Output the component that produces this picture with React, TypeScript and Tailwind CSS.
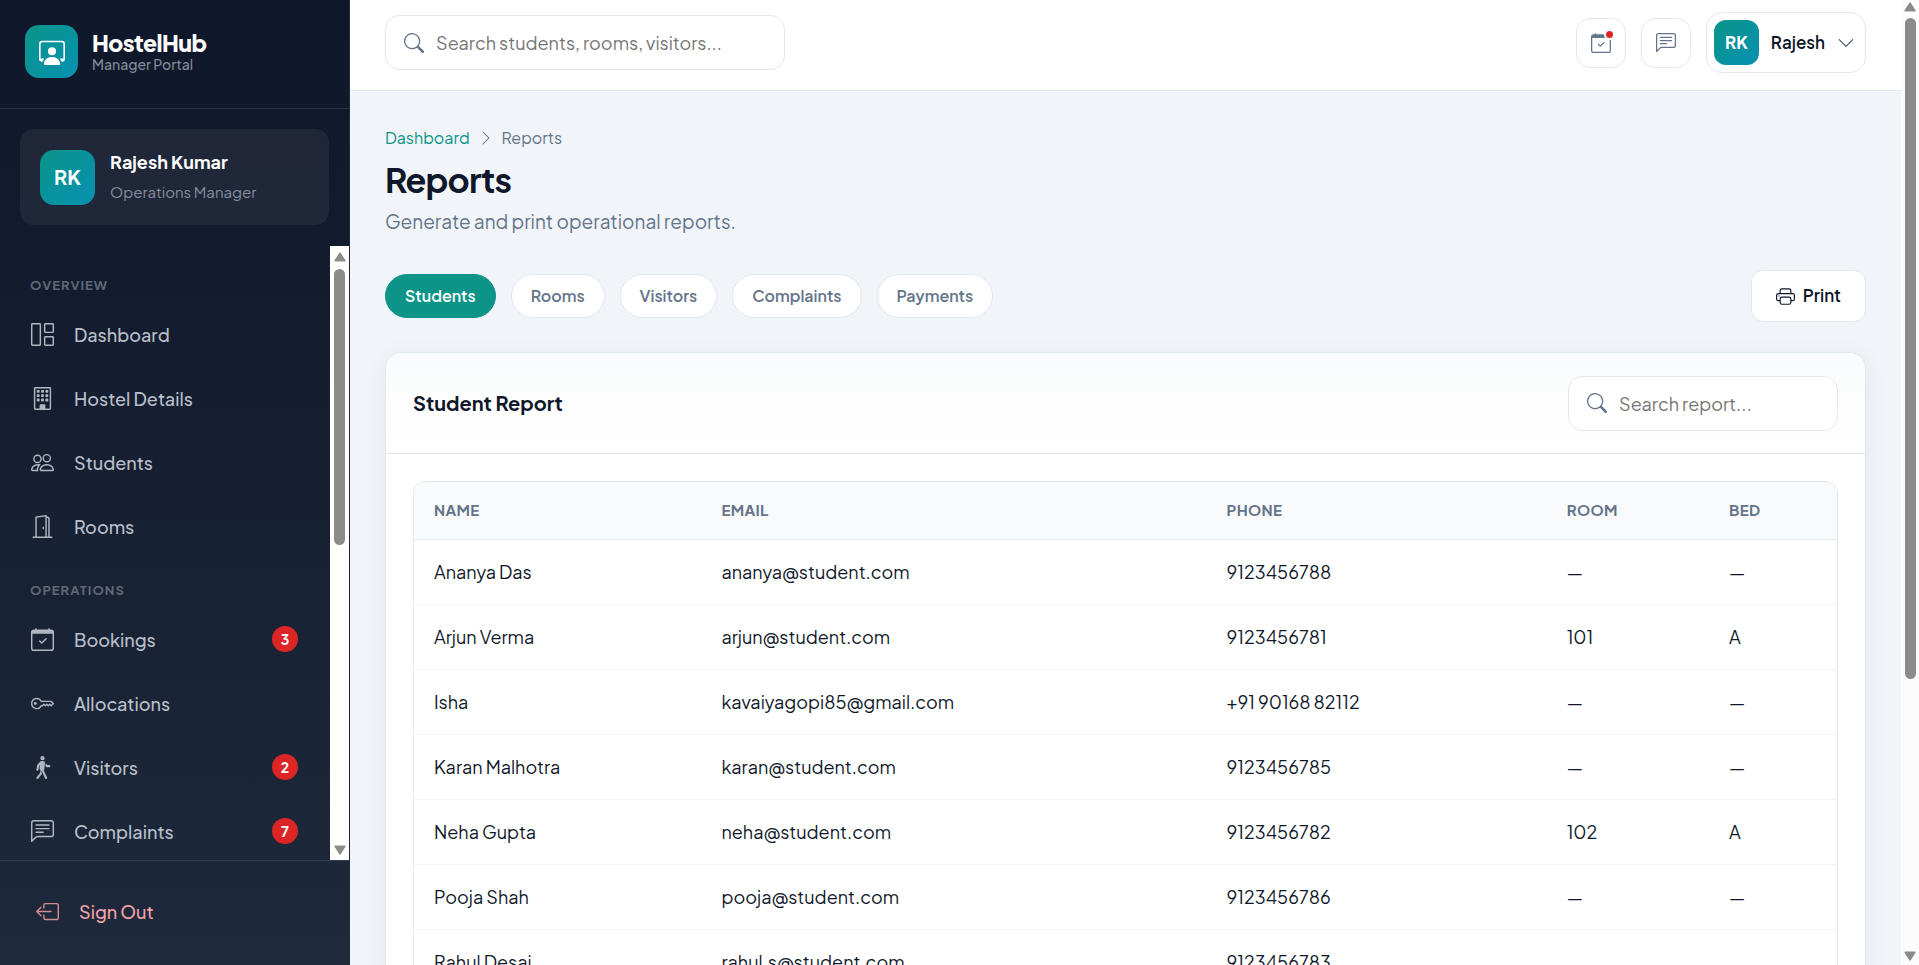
import React from 'react';
import type { IconType } from 'react-icons';
import {
  BsBoxArrowLeft,
  BsBuilding,
  BsCalendarCheck,
  BsChatLeftText,
  BsChevronDown,
  BsChevronRight,
  BsDoorOpen,
  BsGrid1X2,
  BsKey,
  BsPeople,
  BsPersonWalking,
  BsPersonWorkspace,
  BsPrinter,
  BsSearch,
} from 'react-icons/bs';

interface NavItem {
  label: string;
  icon: IconType;
  badge?: number;
}

const navSections: Array<{ title: string; items: NavItem[] }> = [
  {
    title: 'OVERVIEW',
    items: [
      { label: 'Dashboard', icon: BsGrid1X2 },
      { label: 'Hostel Details', icon: BsBuilding },
      { label: 'Students', icon: BsPeople },
      { label: 'Rooms', icon: BsDoorOpen },
    ],
  },
  {
    title: 'OPERATIONS',
    items: [
      { label: 'Bookings', icon: BsCalendarCheck, badge: 3 },
      { label: 'Allocations', icon: BsKey },
      { label: 'Visitors', icon: BsPersonWalking, badge: 2 },
      { label: 'Complaints', icon: BsChatLeftText, badge: 7 },
    ],
  },
];

const tabs = ['Students', 'Rooms', 'Visitors', 'Complaints', 'Payments'];

const students = [
  { name: 'Ananya Das', email: 'ananya@student.com', phone: '9123456788', room: '—', bed: '—' },
  { name: 'Arjun Verma', email: 'arjun@student.com', phone: '9123456781', room: '101', bed: 'A' },
  { name: 'Isha', email: 'kavaiyagopi85@gmail.com', phone: '+91 90168 82112', room: '—', bed: '—' },
  { name: 'Karan Malhotra', email: 'karan@student.com', phone: '9123456785', room: '—', bed: '—' },
  { name: 'Neha Gupta', email: 'neha@student.com', phone: '9123456782', room: '102', bed: 'A' },
  { name: 'Pooja Shah', email: 'pooja@student.com', phone: '9123456786', room: '—', bed: '—' },
  { name: 'Rahul Desai', email: 'rahul.s@student.com', phone: '9123456783', room: '', bed: '' },
];

const ScrollArrow: React.FC<{ down?: boolean }> = ({ down }) => (
  <svg viewBox="0 0 12 10" className={`w-3 h-[10px] shrink-0 ${down ? 'rotate-180' : ''}`}>
    <path
      d="M6 1.2 L10.8 8.8 H1.2 Z"
      fill="#8b8b8b"
      stroke="#8b8b8b"
      strokeWidth="1.6"
      strokeLinejoin="round"
    />
  </svg>
);

const Sidebar = () => (
  <aside className="w-[350px] shrink-0 flex flex-col bg-linear-to-b from-[#0f172a] to-[#1e293b] border-r border-[#1c2942]">
    <div className="flex items-center gap-[14px] px-[25px] h-[109px] pb-[5px] border-b border-white/10">
      <div className="w-[53px] h-[53px] rounded-[14px] bg-linear-135 from-[#0d9488] to-[#0891b2] flex items-center justify-center">
        <BsPersonWorkspace className="w-[26px] h-[26px] text-white" />
      </div>
      <div>
        <div className="text-[23px] leading-[24px] font-extrabold text-white tracking-tight">HostelHub</div>
        <div className="text-[14px] leading-[18px] font-medium text-[#818999]">Manager Portal</div>
      </div>
    </div>

    <div className="mx-5 mt-5 mb-[21px] px-5 py-[18px] rounded-[14px] bg-white/6 flex items-center gap-[15px]">
      <div className="w-[55px] h-[55px] rounded-[14px] bg-linear-135 from-[#0d9488] to-[#0891b2] flex items-center justify-center text-[20px] font-bold text-white">
        RK
      </div>
      <div>
        <div className="text-[18px] leading-[30px] font-bold text-white">Rajesh Kumar</div>
        <div className="text-[15px] leading-[30px] text-[#878e9c]">Operations Manager</div>
      </div>
    </div>

    <div className="flex-1 min-h-0 flex">
      <nav className="flex-1 overflow-hidden px-[15px] pt-5">
        {navSections.map((section) => (
          <div key={section.title} className="mb-[15px]">
            <div className="px-[15px] pt-2 pb-2 text-[13px] leading-[22px] font-bold tracking-[1px] text-[#606878]">
              {section.title}
            </div>
            {section.items.map(({ label, icon: Icon, badge }) => (
              <a
                key={label}
                href="#"
                className="flex items-center h-[60px] mb-1 pl-4 pr-[17px] gap-5 text-[18px] font-medium text-[#b9bfca]"
              >
                <Icon className="w-[23px] h-[23px] text-[#b0b7c3]" />
                <span className="flex-1">{label}</span>
                {badge && (
                  <span className="w-[26px] h-[26px] rounded-full bg-[#dc2626] text-white text-[14px] font-bold flex items-center justify-center">
                    {badge}
                  </span>
                )}
              </a>
            ))}
          </div>
        ))}
      </nav>
      <div className="w-[19px] bg-white flex flex-col items-center pt-[6px] pb-[5px]" aria-hidden="true">
        <ScrollArrow />
        <div className="w-[11px] h-[276px] mt-[7px] rounded-full bg-[#8b8b8b]" />
        <div className="flex-1" />
        <ScrollArrow down />
      </div>
    </div>

    <div className="border-t border-white/10 px-5 pt-5 pb-6">
      <a href="#" className="flex items-center h-[60px] px-4 gap-5 text-[18px] font-medium text-[#f0a3a8]">
        <BsBoxArrowLeft className="w-[23px] h-[23px] text-[#d38a90]" />
        Sign Out
      </a>
    </div>
  </aside>
);

const TopBar = () => (
  <header className="flex items-center justify-between px-[35px] pb-[5px] h-[91px] bg-white border-b border-[#e2e8f0] shrink-0">
    <label className="flex items-center gap-3 w-[400px] h-[55px] px-[18px] rounded-[14px] border border-[#e2e8f0] bg-white">
      <BsSearch className="w-5 h-5 text-[#64748b]" />
      <input
        type="text"
        aria-label="Search"
        placeholder="Search students, rooms, visitors..."
        className="flex-1 min-w-0 text-[18px] outline-none placeholder:text-[#757575]"
      />
    </label>
    <div className="flex items-center gap-[15px]">
      <button
        type="button"
        aria-label="Bookings"
        className="relative w-[50px] h-[50px] rounded-[14px] border border-[#e2e8f0] bg-white flex items-center justify-center text-[#64748b]"
      >
        <BsCalendarCheck className="w-5 h-5" />
        <span className="absolute top-3 right-3 w-[7px] h-[7px] rounded-full bg-[#dc2626] ring-2 ring-white" />
      </button>
      <button
        type="button"
        aria-label="Messages"
        className="w-[50px] h-[50px] rounded-[14px] border border-[#e2e8f0] bg-white flex items-center justify-center text-[#64748b]"
      >
        <BsChatLeftText className="w-5 h-5" />
      </button>
      <button
        type="button"
        className="h-[61px] pl-[7px] pr-[10px] rounded-[16px] border border-[#e2e8f0] bg-white flex items-center gap-3"
      >
        <span className="w-[45px] h-[45px] rounded-[12px] bg-linear-135 from-[#0d9488] to-[#0891b2] flex items-center justify-center text-[17px] font-bold text-white">
          RK
        </span>
        <span className="text-[17px] font-semibold">Rajesh</span>
        <BsChevronDown className="w-[18px] h-[18px] text-[#475569]" />
      </button>
    </div>
  </header>
);

const StudentTable = () => (
  <div className="rounded-[12px] border border-[#e2e8f0] overflow-hidden">
    <table className="w-full table-fixed text-left">
      <thead className="bg-[#f8fafc]">
        <tr className="h-[57px] border-b border-[#e2e8f0] text-[15px] text-[#64748b] tracking-wide">
          <th className="w-[20.2%] px-5 font-bold">NAME</th>
          <th className="w-[35.5%] px-5 font-bold">EMAIL</th>
          <th className="w-[23.9%] px-5 font-bold">PHONE</th>
          <th className="w-[11.4%] px-5 font-bold">ROOM</th>
          <th className="px-5 font-bold">BED</th>
        </tr>
      </thead>
      <tbody>
        {students.map((student) => (
          <tr key={student.email} className="h-[65px] border-b border-[#f1f5f9] text-[18px]">
            <td className="px-5">{student.name}</td>
            <td className="px-5">{student.email}</td>
            <td className="px-5">{student.phone}</td>
            <td className="px-5">{student.room}</td>
            <td className="px-5">{student.bed}</td>
          </tr>
        ))}
      </tbody>
    </table>
  </div>
);

const App: React.FC = () => {
  const activeTab = 'Students';

  return (
    <div className="h-screen flex overflow-hidden bg-[#f1f5f9] text-[#0f172a] font-['Plus_Jakarta_Sans','Inter',sans-serif]">
      <Sidebar />
      <div className="flex-1 min-w-0 flex flex-col">
        <TopBar />
        <main className="flex-1 min-h-0 overflow-hidden px-[35px] pt-[35px]">
          <div className="flex items-center gap-2 text-[16px] leading-[24px] text-[#64748b]">
            <a href="#" className="text-[#0d9488]">
              Dashboard
            </a>
            <BsChevronRight className="w-4 h-4" />
            <span>Reports</span>
          </div>
          <h1 className="mt-2 text-[34px] leading-[44px] font-bold tracking-tight">Reports</h1>
          <p className="mt-1 text-[19px] leading-[30px] text-[#64748b]">
            Generate and print operational reports.
          </p>

          <div className="mt-[34px] flex items-center justify-between">
            <div className="flex gap-[15px]">
              {tabs.map((tab) => (
                <button
                  key={tab}
                  type="button"
                  className={`h-11 px-[19px] rounded-full border text-[16px] font-semibold ${
                    tab === activeTab
                      ? 'bg-[#0d9488] border-[#0d9488] text-white'
                      : 'bg-white border-[#e2e8f0] text-[#64748b]'
                  }`}
                >
                  {tab}
                </button>
              ))}
            </div>
            <button
              type="button"
              className="h-[52px] px-6 rounded-[12px] border border-[#e2e8f0] bg-white flex items-center gap-2 text-[17px] font-semibold"
            >
              <BsPrinter className="w-[19px] h-[19px]" />
              Print
            </button>
          </div>

          <section className="mt-[30px] rounded-[16px] border border-[#e2e8f0] bg-white shadow-[0_4px_24px_rgba(15,23,42,0.06)]">
            <div className="flex items-center justify-between h-[101px] px-[27px] rounded-t-[16px] border-b border-[#e2e8f0] bg-linear-to-b from-[#fafbfc] to-white">
              <h2 className="text-[20px] font-bold">Student Report</h2>
              <label className="flex items-center gap-3 w-[270px] h-[55px] px-[18px] rounded-[14px] border border-[#e2e8f0] bg-white">
                <BsSearch className="w-5 h-5 text-[#64748b]" />
                <input
                  type="text"
                  aria-label="Search report"
                  placeholder="Search report..."
                  className="flex-1 min-w-0 text-[18px] outline-none placeholder:text-[#757575]"
                />
              </label>
            </div>
            <div className="p-[27px]">
              <StudentTable />
            </div>
          </section>
        </main>
      </div>
      <div className="w-[18px] shrink-0 bg-[#fcfcfc] flex flex-col items-center pt-[2px] pb-1" aria-hidden="true">
        <ScrollArrow />
        <div className="w-[11px] h-[661px] mt-[6px] rounded-full bg-[#8b8b8b]" />
        <div className="flex-1" />
        <ScrollArrow down />
      </div>
    </div>
  );
};

export default App;
